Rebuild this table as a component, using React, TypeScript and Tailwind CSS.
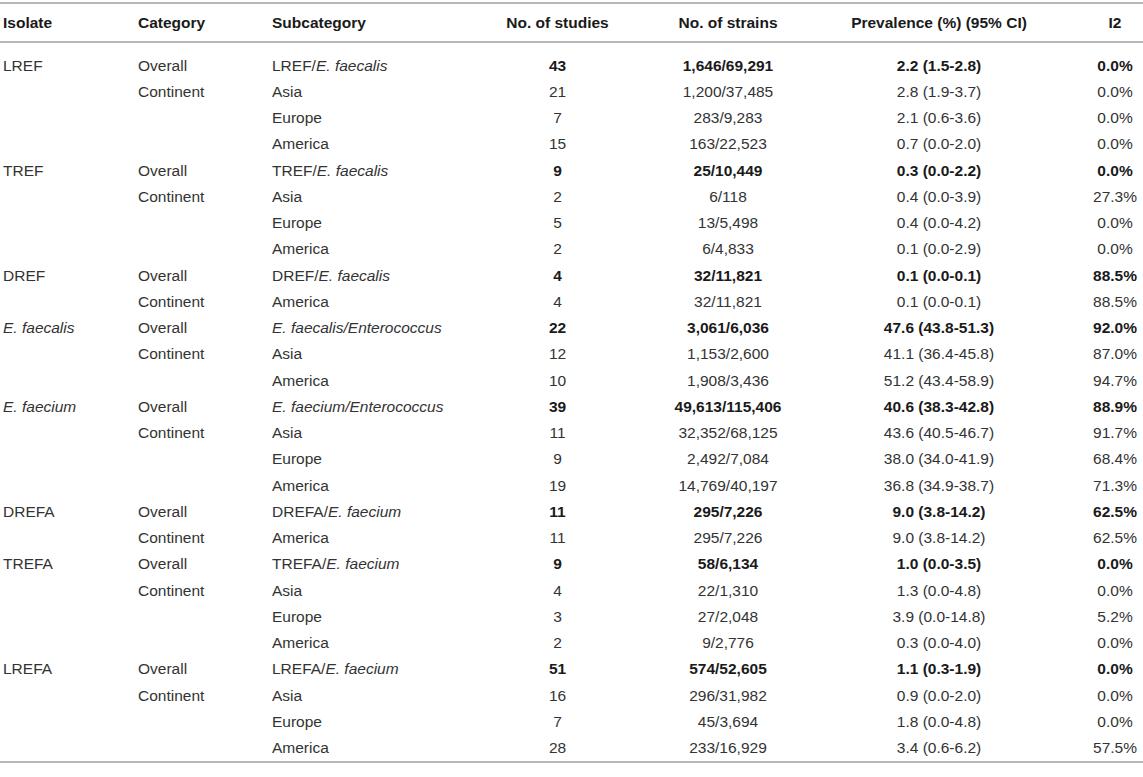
import type { ReactNode } from 'react';

type Row = {
  isolate?: ReactNode;
  category?: string;
  sub: ReactNode;
  studies: string;
  strains: string;
  prev: string;
  i2: string;
  bold?: boolean;
};

const it = (s: string) => <i>{s}</i>;

const rows: Row[] = [
  { isolate: 'LREF', category: 'Overall', sub: <>LREF/{it('E. faecalis')}</>, studies: '43', strains: '1,646/69,291', prev: '2.2 (1.5-2.8)', i2: '0.0%', bold: true },
  { category: 'Continent', sub: 'Asia', studies: '21', strains: '1,200/37,485', prev: '2.8 (1.9-3.7)', i2: '0.0%' },
  { sub: 'Europe', studies: '7', strains: '283/9,283', prev: '2.1 (0.6-3.6)', i2: '0.0%' },
  { sub: 'America', studies: '15', strains: '163/22,523', prev: '0.7 (0.0-2.0)', i2: '0.0%' },
  { isolate: 'TREF', category: 'Overall', sub: <>TREF/{it('E. faecalis')}</>, studies: '9', strains: '25/10,449', prev: '0.3 (0.0-2.2)', i2: '0.0%', bold: true },
  { category: 'Continent', sub: 'Asia', studies: '2', strains: '6/118', prev: '0.4 (0.0-3.9)', i2: '27.3%' },
  { sub: 'Europe', studies: '5', strains: '13/5,498', prev: '0.4 (0.0-4.2)', i2: '0.0%' },
  { sub: 'America', studies: '2', strains: '6/4,833', prev: '0.1 (0.0-2.9)', i2: '0.0%' },
  { isolate: 'DREF', category: 'Overall', sub: <>DREF/{it('E. faecalis')}</>, studies: '4', strains: '32/11,821', prev: '0.1 (0.0-0.1)', i2: '88.5%', bold: true },
  { category: 'Continent', sub: 'America', studies: '4', strains: '32/11,821', prev: '0.1 (0.0-0.1)', i2: '88.5%' },
  { isolate: it('E. faecalis'), category: 'Overall', sub: it('E. faecalis/Enterococcus'), studies: '22', strains: '3,061/6,036', prev: '47.6 (43.8-51.3)', i2: '92.0%', bold: true },
  { category: 'Continent', sub: 'Asia', studies: '12', strains: '1,153/2,600', prev: '41.1 (36.4-45.8)', i2: '87.0%' },
  { sub: 'America', studies: '10', strains: '1,908/3,436', prev: '51.2 (43.4-58.9)', i2: '94.7%' },
  { isolate: it('E. faecium'), category: 'Overall', sub: it('E. faecium/Enterococcus'), studies: '39', strains: '49,613/115,406', prev: '40.6 (38.3-42.8)', i2: '88.9%', bold: true },
  { category: 'Continent', sub: 'Asia', studies: '11', strains: '32,352/68,125', prev: '43.6 (40.5-46.7)', i2: '91.7%' },
  { sub: 'Europe', studies: '9', strains: '2,492/7,084', prev: '38.0 (34.0-41.9)', i2: '68.4%' },
  { sub: 'America', studies: '19', strains: '14,769/40,197', prev: '36.8 (34.9-38.7)', i2: '71.3%' },
  { isolate: 'DREFA', category: 'Overall', sub: <>DREFA/{it('E. faecium')}</>, studies: '11', strains: '295/7,226', prev: '9.0 (3.8-14.2)', i2: '62.5%', bold: true },
  { category: 'Continent', sub: 'America', studies: '11', strains: '295/7,226', prev: '9.0 (3.8-14.2)', i2: '62.5%' },
  { isolate: 'TREFA', category: 'Overall', sub: <>TREFA/{it('E. faecium')}</>, studies: '9', strains: '58/6,134', prev: '1.0 (0.0-3.5)', i2: '0.0%', bold: true },
  { category: 'Continent', sub: 'Asia', studies: '4', strains: '22/1,310', prev: '1.3 (0.0-4.8)', i2: '0.0%' },
  { sub: 'Europe', studies: '3', strains: '27/2,048', prev: '3.9 (0.0-14.8)', i2: '5.2%' },
  { sub: 'America', studies: '2', strains: '9/2,776', prev: '0.3 (0.0-4.0)', i2: '0.0%' },
  { isolate: 'LREFA', category: 'Overall', sub: <>LREFA/{it('E. faecium')}</>, studies: '51', strains: '574/52,605', prev: '1.1 (0.3-1.9)', i2: '0.0%', bold: true },
  { category: 'Continent', sub: 'Asia', studies: '16', strains: '296/31,982', prev: '0.9 (0.0-2.0)', i2: '0.0%' },
  { sub: 'Europe', studies: '7', strains: '45/3,694', prev: '1.8 (0.0-4.8)', i2: '0.0%' },
  { sub: 'America', studies: '28', strains: '233/16,929', prev: '3.4 (0.6-6.2)', i2: '57.5%' },
];

const cols = 'grid grid-cols-[135px_134px_188px_195px_146px_276px_1fr] items-center pl-[3px]';

export default function App() {
  return (
    <div className="min-h-[777px] w-[1143px] bg-white pt-[2px] font-['Liberation_Sans',Arial,sans-serif] text-[15.5px] text-[#333]">
      <div className="border-t-2 border-b-2 border-[#b8b8b8]">
        <div className={cn(cols, 'h-[39px] border-b-2 border-[#b8b8b8] font-bold text-[#1a1a1a]')}>
          <span>Isolate</span>
          <span>Category</span>
          <span>Subcategory</span>
          <span className="text-center">No. of studies</span>
          <span className="text-center">No. of strains</span>
          <span className="text-center">Prevalence (%) (95% CI)</span>
          <span className="pl-[10px] text-center">I2</span>
        </div>
        <div className="pt-[9px]">
          {rows.map((r, i) => (
            <div key={i} className={cn(cols, 'h-[26.25px]')}>
              <span>{r.isolate}</span>
              <span>{r.category}</span>
              <span>{r.sub}</span>
              <span className={cn('text-center', r.bold && 'font-bold text-[#1a1a1a]')}>{r.studies}</span>
              <span className={cn('text-center', r.bold && 'font-bold text-[#1a1a1a]')}>{r.strains}</span>
              <span className={cn('text-center', r.bold && 'font-bold text-[#1a1a1a]')}>{r.prev}</span>
              <span className={cn('pl-[10px] text-center', r.bold && 'font-bold text-[#1a1a1a]')}>{r.i2}</span>
            </div>
          ))}
        </div>
      </div>
    </div>
  );
}

function cn(...parts: (string | false | undefined)[]) {
  return parts.filter(Boolean).join(' ');
}
